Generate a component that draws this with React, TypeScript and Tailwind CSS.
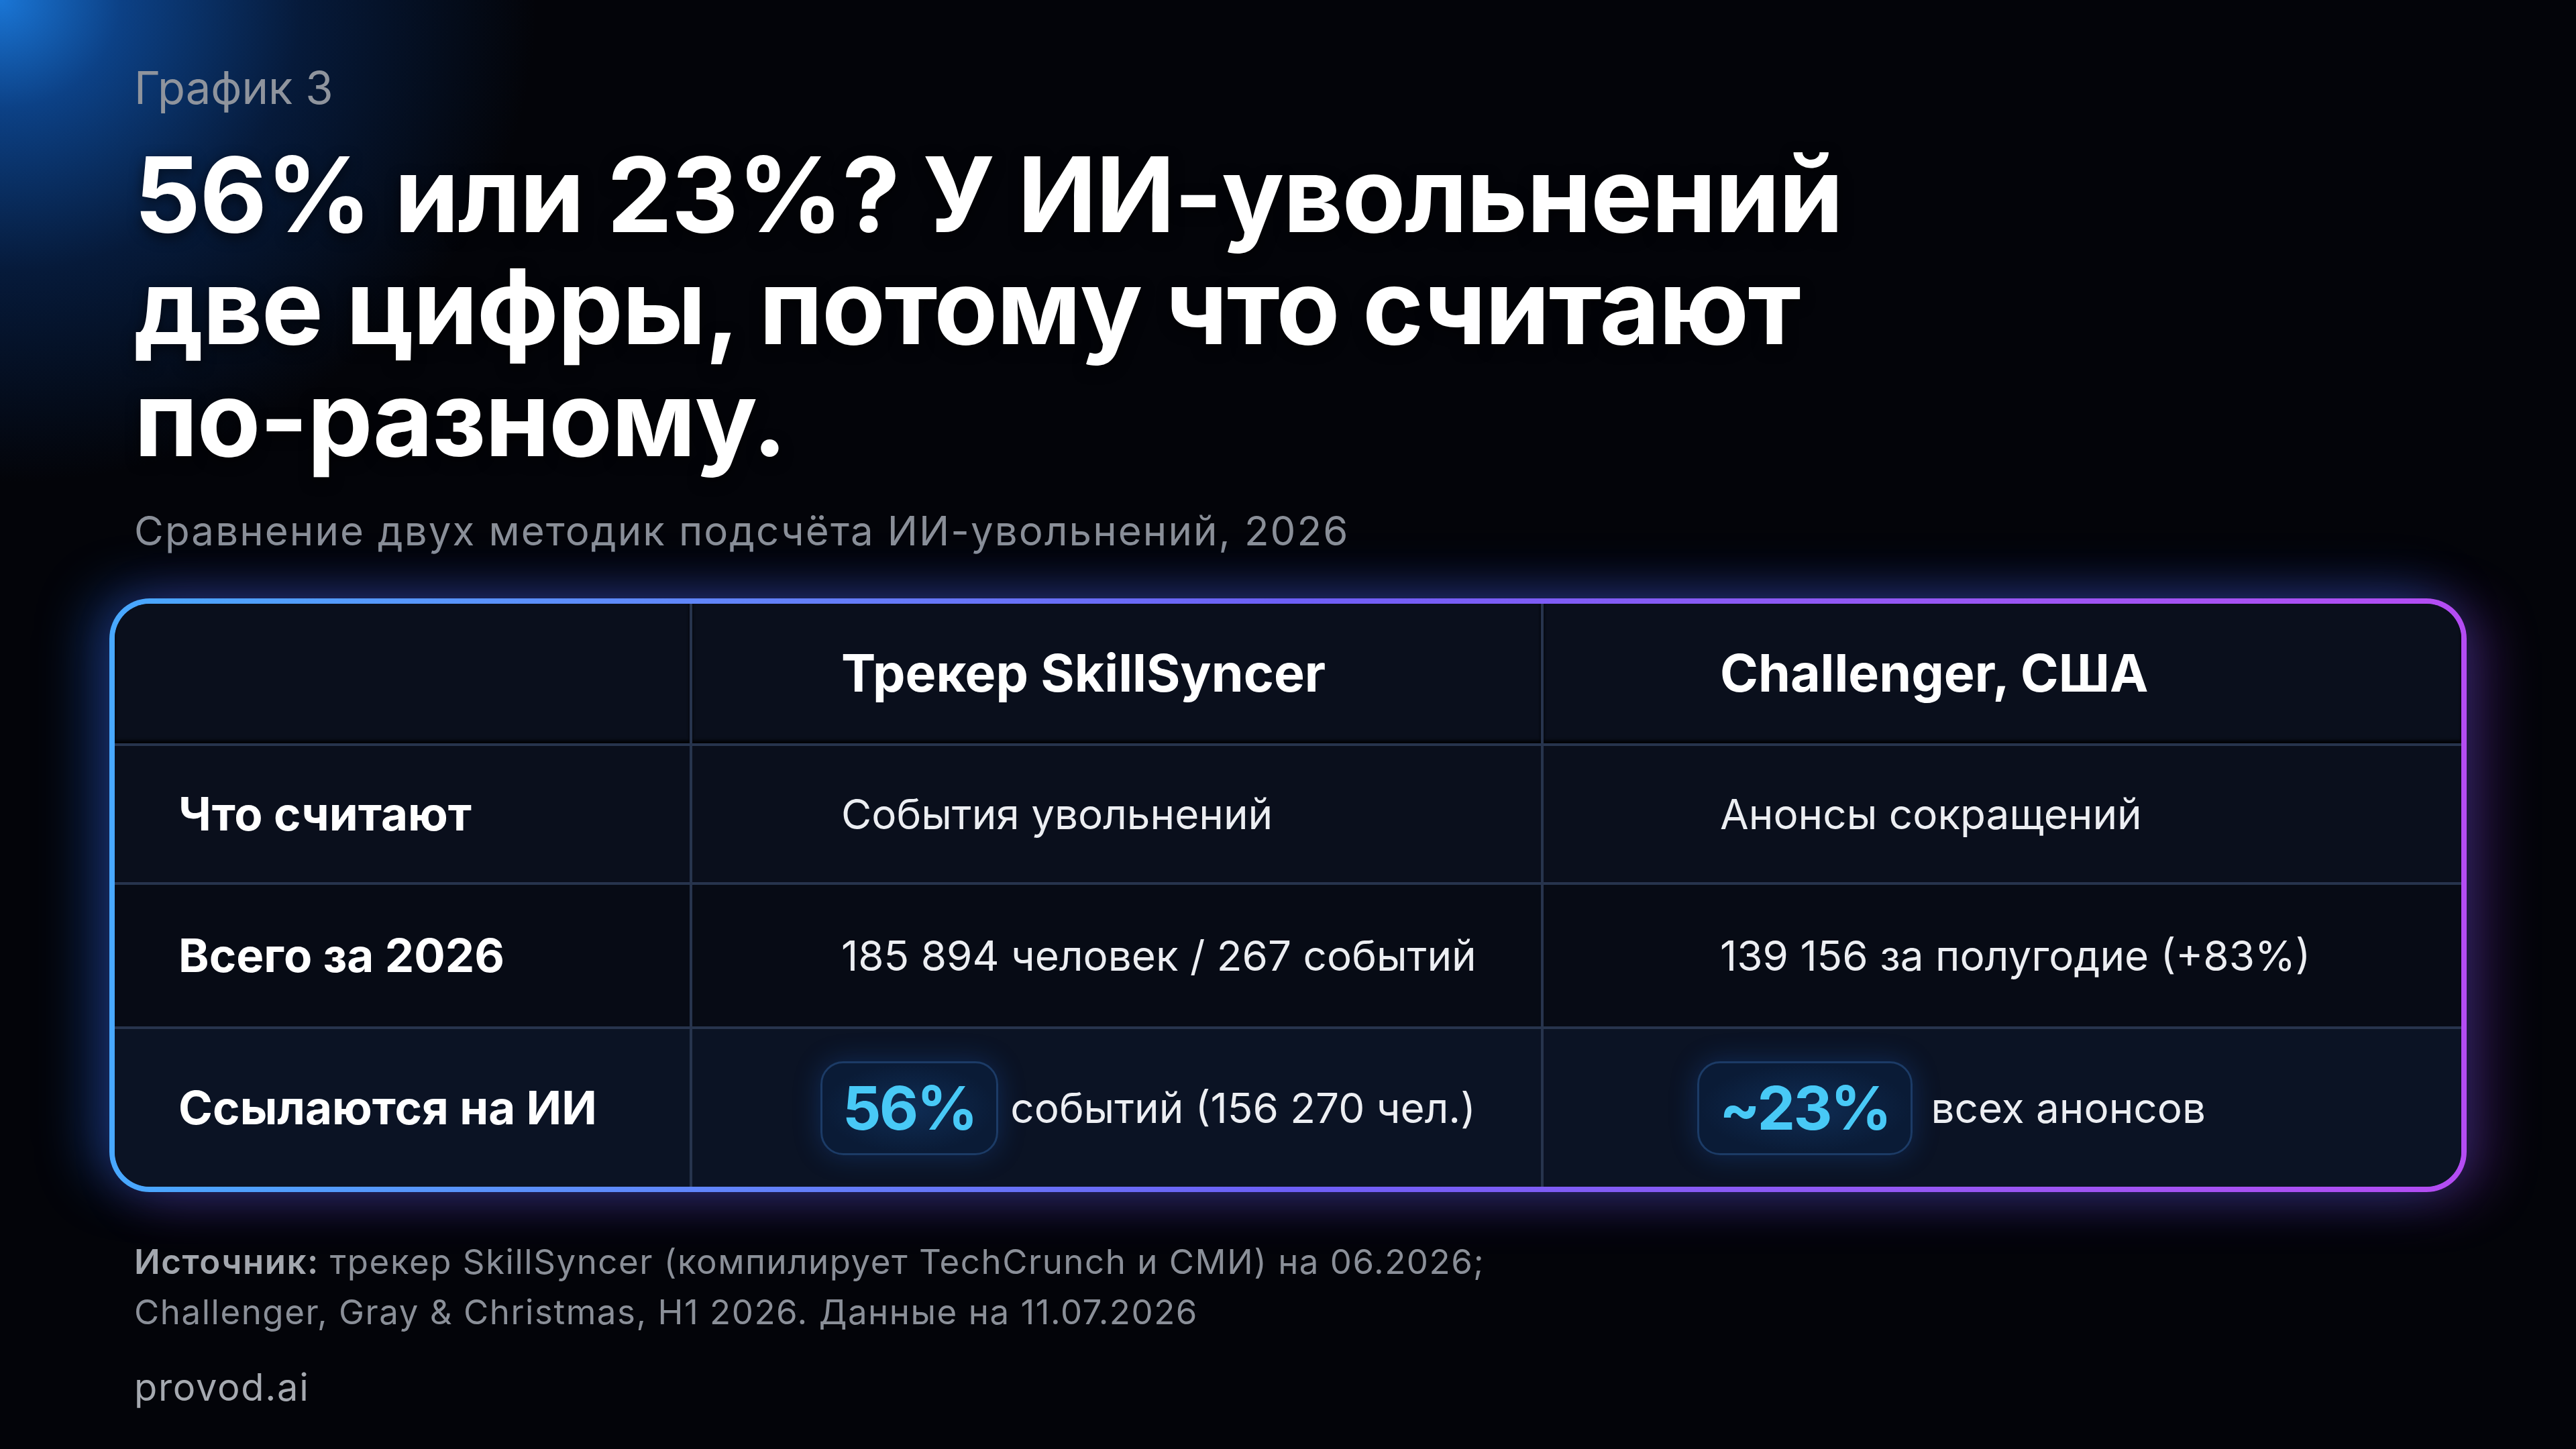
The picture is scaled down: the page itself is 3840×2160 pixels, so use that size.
import React from "react";

const rows = [
  { label: "Что считают", a: "События увольнений", b: "Анонсы сокращений", bg: "bg-[#0a0f1c]" },
  { label: "Всего за 2026", a: "185 894 человек / 267 событий", b: "139 156 за полугодие (+83%)", bg: "bg-[#070b15]" },
];

function Pill({ children }: { children: React.ReactNode }) {
  return (
    <span className="flex h-[140px] items-center rounded-[34px] border-[3px] border-[#1c3b66] bg-[radial-gradient(ellipse_at_center,#0f2d55_0%,#0a1b36_70%)] px-[30px] text-[90px] font-bold leading-none tracking-[-0.03em] text-[#48c9f6] shadow-[0_0_40px_rgba(30,110,230,0.25)]">
      {children}
    </span>
  );
}

export default function App() {
  return (
    <div className="relative h-[2160px] w-[3840px] overflow-hidden bg-[#030409] bg-[radial-gradient(ellipse_1000px_900px_at_0_0,#1a76d6_0%,#0c4186_18%,#061a3a_45%,transparent_80%)] font-['Inter','Noto_Sans',sans-serif]">
      <div className="flex flex-col pl-[163px] pr-[163px] pt-[91px]">
        {/* Заголовок */}
        <div className="pl-[37px] text-[67px] leading-[80px] text-[#8f949d]">График 3</div>
        <h1 className="mt-[35px] pl-[37px] text-[155px] font-bold leading-[167px] tracking-[-0.01em] text-white [text-shadow:0_6px_20px_rgba(0,0,0,0.6)]">
          56% или 23%? У ИИ-увольнений
          <br />
          две цифры, потому что считают
          <br />
          по-разному.
        </h1>
        <div className="mt-[49px] whitespace-nowrap pl-[37px] text-[60px] leading-[70px] tracking-[0.035em] text-[#8a8f98]">
          Сравнение двух методик подсчёта ИИ-увольнений, 2026
        </div>

        {/* Таблица */}
        <div className="mt-[66px] rounded-[60px] bg-linear-to-r from-[#48a8ff] via-[#6d5ff6] to-[#b44cf3] p-[8px] shadow-[-30px_-10px_80px_rgba(40,120,255,0.35),30px_10px_80px_rgba(160,70,240,0.3)]">
          <div className="grid grid-cols-[857px_1265px_1fr] grid-rows-[208px_203px_211px_235px] gap-[4px] overflow-hidden whitespace-nowrap rounded-[52px] bg-[#27344d]">
            <div className="bg-[#0a0f1c] shadow-[inset_0_-4px_4px_rgba(0,0,0,0.9)]" />
            <div className="flex items-center bg-[#0a0f1c] pl-[222px] text-[77px] font-bold text-white shadow-[inset_0_-4px_4px_rgba(0,0,0,0.9)]">
              Трекер SkillSyncer
            </div>
            <div className="flex items-center bg-[#0a0f1c] pl-[263px] text-[77px] font-bold text-white shadow-[inset_0_-4px_4px_rgba(0,0,0,0.9)]">
              Challenger, США
            </div>

            {rows.map((r) => (
              <React.Fragment key={r.label}>
                <div className={`flex items-center ${r.bg} pl-[95px] text-[69px] font-bold text-white`}>{r.label}</div>
                <div className={`flex items-center ${r.bg} pl-[222px] text-[62px] text-[#eceef2]`}>{r.a}</div>
                <div className={`flex items-center ${r.bg} pl-[263px] text-[62px] text-[#eceef2]`}>{r.b}</div>
              </React.Fragment>
            ))}

            <div className="flex items-center bg-[#0b1324] pl-[95px] text-[69px] font-bold text-white">Ссылаются на ИИ</div>
            <div className="flex items-center gap-[18px] bg-[#0b1324] pl-[191px] text-[62px] text-[#eceef2]">
              <Pill>56%</Pill>
              <span>событий (156 270 чел.)</span>
            </div>
            <div className="flex items-center gap-[28px] bg-[#0b1324] pl-[229px] text-[62px] text-[#eceef2]">
              <Pill>~23%</Pill>
              <span>всех анонсов</span>
            </div>
          </div>
        </div>

        {/* Источник */}
        <div className="mt-[66px] pl-[37px] text-[51px] leading-[75px] tracking-[0.03em] text-[#8a8f98]">
          <span className="font-semibold text-[#a3a7ae]">Источник:</span> трекер SkillSyncer (компилирует TechCrunch и СМИ) на 06.2026;
          <br />
          Challenger, Gray &amp; Christmas, H1 2026. Данные на 11.07.2026
        </div>
        <div className="mt-[42px] pl-[37px] text-[56px] leading-[66px] tracking-[0.03em] text-[#a5a9b0]">provod.ai</div>
      </div>
    </div>
  );
}
